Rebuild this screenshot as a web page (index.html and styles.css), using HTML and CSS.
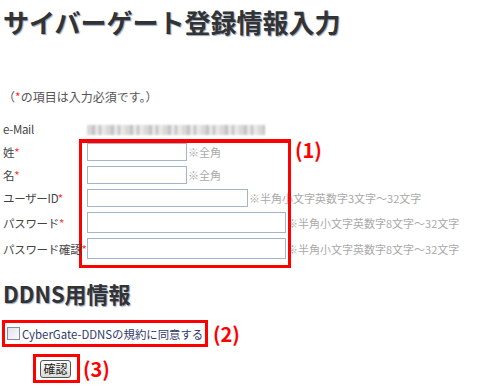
FILE: index.html
```html
<!DOCTYPE html>
<html lang="ja">
<head>
  <meta charset="UTF-8" />
  <title>サイバーゲート登録情報入力</title>
  <link rel="stylesheet" href="styles.css">
</head>
<body>
  <div class="page">
    <h1>サイバーゲート登録情報入力</h1>
    <p class="note">（<span class="req">*</span>の項目は入力必須です。）</p>

    <!-- 登録フォーム -->
    <div class="form">
      <div class="label">e-Mail</div>
      <div class="field"><span class="mail-blur"></span></div>

      <div class="label">姓<span class="req">*</span></div>
      <div class="field"><input class="input short" type="text"><span class="hint">※全角</span></div>

      <div class="label">名<span class="req">*</span></div>
      <div class="field"><input class="input short" type="text"><span class="hint">※全角</span></div>

      <div class="label">ユーザーID<span class="req">*</span></div>
      <div class="field"><input class="input mid" type="text"><span class="hint">※半角小文字英数字3文字～32文字</span></div>

      <div class="label">パスワード<span class="req">*</span></div>
      <div class="field"><input class="input long" type="password"><span class="hint">※半角小文字英数字8文字～32文字</span></div>

      <div class="label">パスワード確認<span class="req">*</span></div>
      <div class="field"><input class="input long" type="password"><span class="hint">※半角小文字英数字8文字～32文字</span></div>

      <!-- 注釈 (1) -->
      <div class="mark-box"></div>
      <div class="mark-num num-1">(1)</div>
    </div>

    <h2>DDNS用情報</h2>

    <div class="agree-row">
      <label class="agree">
        <input type="checkbox" class="check">
        <span>CyberGate-DDNSの規約に同意する</span>
      </label>
      <span class="mark-num">(2)</span>
    </div>

    <div class="submit-row">
      <div class="submit-box"><button class="btn">確認</button></div>
      <span class="mark-num">(3)</span>
    </div>
  </div>
</body>
</html>
```

FILE: styles.css
```css
* {
  box-sizing: border-box;
}
body {
  margin: 0;
  background: #fff;
  font-family: 'Noto Sans CJK JP', 'Noto Sans', sans-serif;
  color: #333;
}
.page {
  padding: 0 3px;
}
h1 {
  margin: 0;
  padding-top: 4px;
  font-size: 26px;
  line-height: 36px;
  font-weight: bold;
  color: #333;
  text-shadow: 1px 1px 1px #8fa3bd;
}
.note {
  margin: 48px 0 0;
  font-size: 12px;
  line-height: 18px;
  color: #555;
}
.req {
  color: #f33;
}

/* フォーム */
.form {
  position: relative;
  margin-top: 14px;
  display: grid;
  grid-template-columns: 84px auto;
  row-gap: 5px;
  align-items: center;
  font-size: 12px;
}
.label {
  position: relative;
  z-index: 1;
  color: #444;
  font-size: 11.5px;
  letter-spacing: -0.3px;
  line-height: 18px;
  white-space: nowrap;
}
.field {
  display: flex;
  align-items: center;
  min-height: 18px;
}
.mail-blur {
  display: block;
  width: 178px;
  height: 10px;
  margin-top: 2px;
  background: repeating-linear-gradient(90deg, #d8d8d8 0 5px, #c4c0bc 5px 8px, #e6e8ea 8px 12px, #b8bcc4 12px 14px, #ebe7e2 14px 19px);
  filter: blur(1px);
}
.input {
  height: 18px;
  border: 1px solid #a3b5cc;
  background: #fff;
  padding: 0 2px;
  margin: 0;
  font-size: 12px;
}
.short { width: 100px; }
.mid { width: 161px; }
.long { width: 199px; height: 21px; }
.hint {
  margin-left: 1px;
  font-size: 11px;
  color: #aaa;
  white-space: nowrap;
}

/* 注釈 */
.mark-box {
  position: absolute;
  left: 76px;
  top: 19px;
  width: 212px;
  height: 129px;
  border: 3px solid #f00;
  border-top-width: 4px;
  pointer-events: none;
}
.mark-num {
  font-size: 20px;
  font-weight: bold;
  color: #f00;
  line-height: 24px;
}
.num-1 {
  position: absolute;
  left: 292px;
  top: 18px;
}

h2 {
  margin: 20px 0 0;
  font-size: 22px;
  line-height: 28px;
  font-weight: bold;
  color: #333;
  text-shadow: 1px 1px 1px #8fa3bd;
}

.agree-row {
  margin-top: 13px;
  margin-left: -1px;
  display: flex;
  align-items: center;
  gap: 5px;
}
.agree {
  display: flex;
  align-items: center;
  gap: 2px;
  height: 27px;
  width: 206px;
  padding-left: 2px;
  border: 3px solid #f00;
  font-size: 11.4px;
  color: #2f3a6b;
  white-space: nowrap;
}
.check {
  appearance: none;
  flex: none;
  margin: 0;
  width: 13px;
  height: 13px;
  border: 1px solid #7d8fa8;
  background: linear-gradient(135deg, #dfe3ea, #fbfbfc);
}

.submit-row {
  margin-top: 7px;
  margin-left: 30px;
  display: flex;
  align-items: center;
  gap: 3px;
}
.submit-box {
  width: 47px;
  height: 29px;
  border: 3px solid #f00;
  padding: 3px 0 0 4px;
}
.btn {
  display: block;
  width: 31px;
  height: 18px;
  padding: 0;
  border: 1px solid #555;
  border-radius: 3px;
  background: linear-gradient(#fbfbfb, #dcdcd6);
  font-family: inherit;
  font-size: 12px;
  line-height: 16px;
  color: #222;
}
```
